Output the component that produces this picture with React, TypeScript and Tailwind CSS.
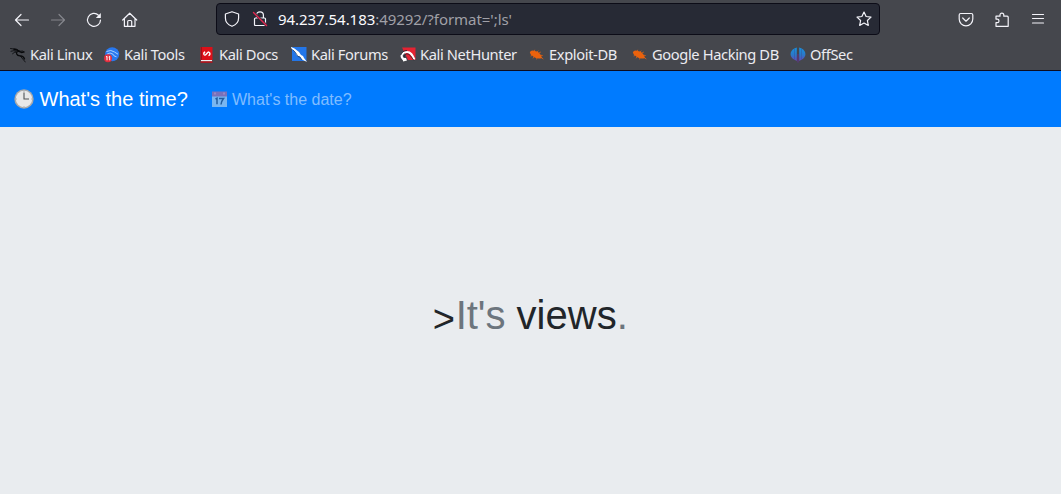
import type { ReactNode } from "react";

function Glyph({ children, className = "text-[#f4f4fa]" }: { children: ReactNode; className?: string }) {
  return (
    <svg
      viewBox="0 0 16 16"
      className={`size-4 shrink-0 ${className}`}
      fill="none"
      stroke="currentColor"
      strokeWidth="1.2"
      strokeLinecap="round"
      strokeLinejoin="round"
    >
      {children}
    </svg>
  );
}

function Favicon({ children }: { children: ReactNode }) {
  return (
    <svg viewBox="0 0 16 16" className="size-4 shrink-0" fill="none">
      {children}
    </svg>
  );
}

const exploitIcon = (
  <g stroke="#ea620d" strokeLinecap="round">
    <path d="M.8 5.500Q1.500 3.500 3.500 3.500L8 4.500q3.500 1.800 5 6.500-5 1.500-8.500-1.200L1.800 7.500z" fill="#ea620d" stroke="none" />
    <path d="M5 4.300 5.500 3.200M8 5.200 9 4M10 6l1.500-.8M11 8.200l2.300.3M3 8.500l-1 .4M5 10l-.7 1M8 11l-.3 1M12 10.300l2 1.500" strokeWidth=".8" />
  </g>
);

const bookmarks = [
  {
    label: "Kali Linux",
    width: "w-[94px]",
    icon: (
      <g stroke="#08090b" strokeLinecap="round" strokeLinejoin="round">
        <path d="M.5 1.500Q3 2 5 1.800T9 4.300L12.500 4 14 5.200M1 4.200Q4 3 6 4.300M2.500 6.700Q4 5 6.500 5" strokeWidth=".8" />
        <path d="M4 2.500Q7 2.500 9.500 4.200 6 4.200 6.700 7 7.500 9 10.500 8.800 13.500 8.800 14.500 12M9 4.300 11.500 5.500 14 4.800" strokeWidth="1.300" />
        <path d="M10.500 9.300 15.300 15" strokeWidth=".8" />
      </g>
    ),
  },
  {
    label: "Kali Tools",
    width: "w-[95px]",
    icon: (
      <>
        <circle cx="8.200" cy="7.300" r="7" fill="#2878ef" />
        <path d="M2.500 4.500Q7 2.200 10.500 5L14 7.200M3 7.200Q6 4.800 9 7.200 9.500 9.400 12.500 9.800" stroke="#b9d9ff" strokeWidth=".9" />
        <circle cx="4" cy="11.300" r="4" fill="#e32d3d" />
        <path d="m2 10 1-.7v4M4.700 10l1-.7v4" stroke="white" strokeWidth="1" />
      </>
    ),
  },
  {
    label: "Kali Docs",
    width: "w-[92px]",
    icon: (
      <>
        <path d="M1.500 0h12v13h-12z" fill="#dc1019" />
        <path d="M2 13h11v1.500H2z" fill="#eeeeef" />
        <path d="M1.500 14.300h12v1.500h-12z" fill="#bd0d16" />
        <path d="M2.500 0v13" stroke="#a30e18" />
        <path d="M6.200 4.800Q4.300 5.500 5 7.500 5.800 8.800 7.200 7.200L8.500 5.700Q10 4.300 10.800 6 11.300 8 9.500 8.700" stroke="white" strokeWidth="1.400" />
      </>
    ),
  },
  {
    label: "Kali Forums",
    width: "w-[109px]",
    icon: (
      <>
        <path d="M1 0h14.500v14H1z" fill="#2376e8" />
        <path d="M0 0 3.500 1.500 8 5l2 3 2 1 1 2 3 4-5-2.500-2-3-3-1-2-4L0 1z" fill="white" />
        <path d="m2 3 3 3 2 3.500 2 .5 2 3" stroke="#18212b" strokeWidth=".5" />
      </>
    ),
  },
  {
    label: "Kali NetHunter",
    width: "w-[129px]",
    icon: (
      <>
        <path d="M2 .5h13.500v12.500H8z" fill="#e52332" />
        <path d="M5 13C-1 10 2 5 7 5c4 0 5.500 3.500 7.500 7.500" stroke="white" strokeWidth="2" />
        <path d="m2.200 11 1 3.500L7 13.500 6 11" fill="white" />
        <path d="M4.200 10C4.500 7 7 6.200 9 7.500c2 1.500 3 3.500 5 6M.8 8C2 5 4 3.500 7 3.500" stroke="#20232a" strokeWidth=".8" />
      </>
    ),
  },
  { label: "Exploit-DB", width: "w-[103px]", icon: exploitIcon },
  { label: "Google Hacking DB", width: "w-[158px]", icon: exploitIcon },
  {
    label: "OffSec",
    width: "w-[70px]",
    icon: (
      <>
        <defs>
          <linearGradient id="offsec" x1="0" y1="0" x2="0" y2="16" gradientUnits="userSpaceOnUse">
            <stop offset="0" stopColor="#1693e0" />
            <stop offset=".5" stopColor="#2b78c8" />
            <stop offset="1" stopColor="#7935b5" />
          </linearGradient>
        </defs>
        <path
          d="M6.800.5v13.500L4.600 12.700C-1 10.500-.5 4 4.400 1.600zM9.200.5v13.500l2.200-1.300C17 10.500 16.500 4 11.600 1.600z"
          fill="url(#offsec)"
        />
        <path d="M4.500 2v10.500M11.500 2v10.500" stroke="#34559c" strokeWidth=".5" />
        <path d="M8 7v8.500" stroke="#63308e" />
      </>
    ),
  },
];

function NavigationBar() {
  return (
    <div className="flex h-[39px] items-center pl-[14px] pr-[15px]">
      <div className="flex w-[202px] shrink-0 items-center gap-5">
        <Glyph><path d="M14.500 8h-13M7 2.500 1.500 8 7 13.500" /></Glyph>
        <Glyph className="text-[#85868c]"><path d="M1.500 8h13M9 2.500 14.500 8 9 13.500" /></Glyph>
        <Glyph>
          <path d="M12.500 3.200A6.500 6.500 0 1 0 14.500 8" />
          <path d="M14.800 1v5H9.800z" fill="currentColor" stroke="none" />
        </Glyph>
        <Glyph>
          <path d="M.7 8 7.700 1.200 14.700 8M2.400 6.700v7.600H13V6.700M5.700 14V9.500Q5.700 8.500 6.700 8.500h2q1 0 1 1V14" />
        </Glyph>
      </div>
      <div className="mb-[2px] flex h-8 w-[664px] shrink-0 items-center rounded-[4px] border border-[#0c0c17] bg-[#272a35] px-[7px]">
        <Glyph><path d="M8 .8 14.600 3v4C14.600 11 12 13.800 8 15.300 4 13.800 1.400 11 1.400 7V3z" /></Glyph>
        <div className="ml-3 flex">
          <Glyph>
            <path d="M4.600 7V4Q4.600.8 8 .8T11.400 4v3M3.500 7h9q1 0 1 1v5.500q0 1-1 1h-9q-1 0-1-1V8q0-1 1-1z" />
            <path d="m1.500 1.500 13 13" stroke="#272a35" strokeWidth="2.600" />
            <path d="m1.500 1.500 13 13" stroke="#e22850" strokeWidth="1.400" />
          </Glyph>
        </div>
        <div className="ml-[10px] flex-1 whitespace-pre text-[15px] leading-5 tracking-[-0.05px] text-[#a0a0a7]">
          <span className="text-[#fbfbfe]">94.237.54.183</span>:49292/?format=';ls'
        </div>
        <Glyph>
          <path d="m8 1 2.100 4.500 4.900.600-3.600 3.400.9 4.900L8 12l-4.300 2.400.9-4.900L1 6.100l4.900-.6z" />
        </Glyph>
      </div>
      <div className="ml-auto flex items-center gap-5">
        <Glyph>
          <path d="M2.700 1.500h10.600q1.500 0 1.500 1.500V7a6.800 6.800 0 0 1-13.600 0V3Q1.200 1.500 2.700 1.500zM4.700 6 8 9.200 11.300 6" />
        </Glyph>
        <Glyph>
          <path d="M2 4.200h4V3a1.900 1.900 0 0 1 3.800 0v1.200h3.400q1 0 1 1v9.100H2v-3.600h1.200a1.800 1.800 0 0 0 0-3.600H2z" />
        </Glyph>
        <Glyph><path d="M2.500 2.500h11M2.500 6.500h11M2.500 11h11" /></Glyph>
      </div>
    </div>
  );
}

export default function App() {
  return (
    <div className="flex h-[494px] w-[1061px] flex-col overflow-hidden bg-[#e9ecef] font-['Liberation_Sans',Arial,sans-serif]">
      <header className="h-[71px] shrink-0 border-b border-[#0c0c20] bg-[#45474d] font-['Noto_Sans',sans-serif]">
        <NavigationBar />
        <nav className="flex h-[31px] items-center pl-[10px]">
          {bookmarks.map(({ label, width, icon }) => (
            <div key={label} className={`flex shrink-0 items-center gap-1 ${width}`}>
              <Favicon>{icon}</Favicon>
              <span className="mb-[2px] whitespace-nowrap text-[14.67px] leading-5 tracking-[-0.37px] text-[#ececf1]">{label}</span>
            </div>
          ))}
        </nav>
      </header>
      <nav className="flex h-14 shrink-0 items-center bg-[#007bff] pl-[14px]">
        <a className="flex w-[197px] items-center whitespace-nowrap text-[20px] leading-[30px] text-white">
          <svg viewBox="0 0 20 20" className="mr-[5.5px] size-5 shrink-0">
            <circle cx="10" cy="10" r="9.700" fill="#a7a9ab" />
            <circle cx="10" cy="10" r="8.200" fill="#e8e8e8" />
            <path d="M10 3.500V10h5" fill="none" stroke="#505355" strokeWidth="1.100" />
            <path d="M10 2v1M18 10h-1M10 18v-1M2 10h1" stroke="#999" strokeWidth=".7" />
          </svg>
          What's the time?
        </a>
        <a className="flex items-center whitespace-nowrap pt-px text-[16px] leading-6 text-[#80bdff]">
          <svg viewBox="0 0 17 17" className="mr-1 size-[17px] shrink-0">
            <path d="M1 2h15v14H1z" fill="#78b6f1" />
            <path d="M1 .5h15v5H1z" fill="#7971ba" />
            <path d="M4 1.500v2M13 1.500v2" stroke="#b7a1cd" />
            <path d="m4.500 8 1.500-.8v6M8 7.500h4.500q-2 2.500-2.500 6" fill="none" stroke="#235e9f" strokeWidth="1.500" />
          </svg>
          What's the date?
        </a>
      </nav>
      <main className="flex flex-1 items-center justify-center pr-px pt-2">
        <h1 className="flex h-12 items-center whitespace-pre text-[40px] leading-[48px] text-[#212529]">
          <span className="w-[23.4px] pl-[0.5px] pt-[9px] text-[38px] leading-[48px]">&gt;</span>
          <span className="text-[#6c757d]">It's</span> views<span className="text-[#6c757d]">.</span>
        </h1>
      </main>
    </div>
  );
}
